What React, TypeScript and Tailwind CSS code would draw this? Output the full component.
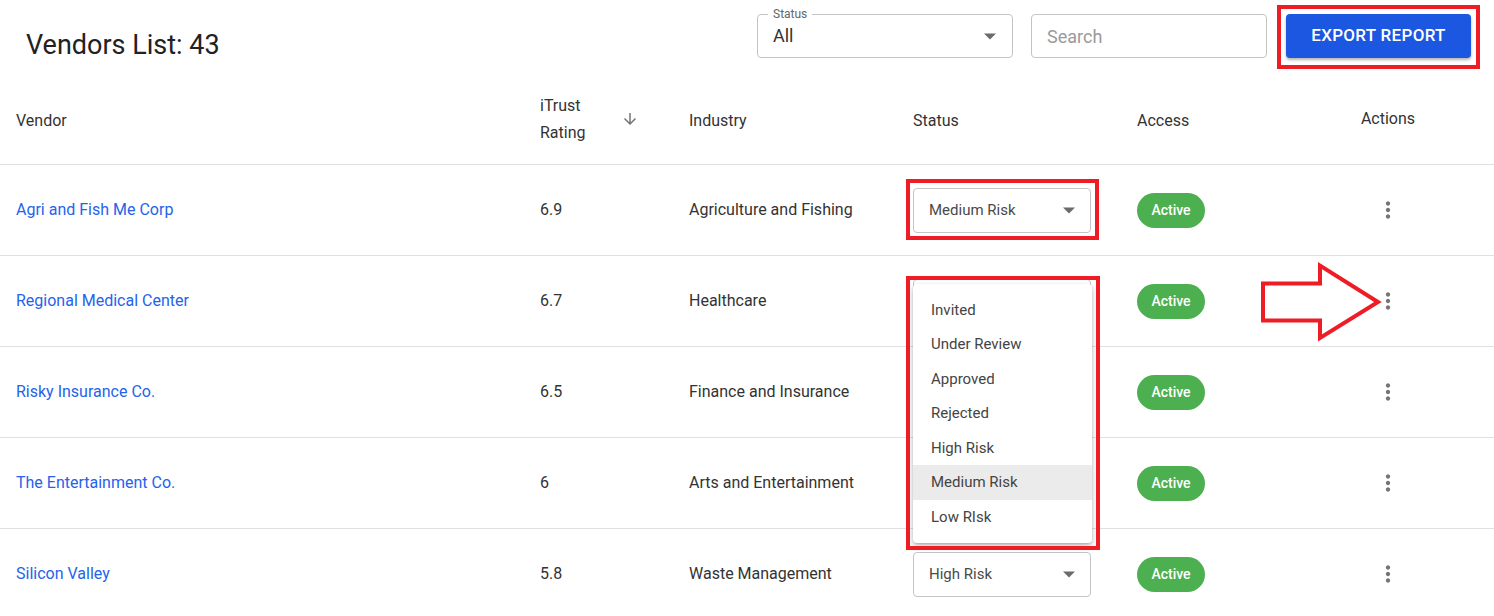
import React from "react";

type Vendor = {
  name: string;
  rating: string;
  industry: string;
  status: string;
};

const vendors: Vendor[] = [
  { name: "Agri and Fish Me Corp", rating: "6.9", industry: "Agriculture and Fishing", status: "Medium Risk" },
  { name: "Regional Medical Center", rating: "6.7", industry: "Healthcare", status: "" },
  { name: "Risky Insurance Co.", rating: "6.5", industry: "Finance and Insurance", status: "" },
  { name: "The Entertainment Co.", rating: "6", industry: "Arts and Entertainment", status: "" },
  { name: "Silicon Valley", rating: "5.8", industry: "Waste Management", status: "High Risk" },
];

const menuOptions = ["Invited", "Under Review", "Approved", "Rejected", "High Risk", "Medium Risk", "Low RIsk"];

const cols = "grid grid-cols-[524px_149px_224px_224px_161px_1fr]";

function Caret() {
  return (
    <svg width="14" height="8" viewBox="0 0 14 8" className="shrink-0">
      <path d="M1 1.5h12L7 7.5z" fill="#6b6b6b" />
    </svg>
  );
}

function MoreVert() {
  return (
    <svg width="26" height="26" viewBox="0 0 24 24" fill="#757575">
      <path d="M12 8c1.1 0 2-.9 2-2s-.9-2-2-2-2 .9-2 2 .9 2 2 2zm0 2c-1.1 0-2 .9-2 2s.9 2 2 2 2-.9 2-2-.9-2-2-2zm0 6c-1.1 0-2 .9-2 2s.9 2 2 2 2-.9 2-2-.9-2-2-2z" />
    </svg>
  );
}

function StatusSelect({ value }: { value: string }) {
  return (
    <div className="flex h-[45px] w-[178px] items-center justify-between rounded border border-[#c4c4c4] bg-white pl-[15px] pr-[14px] text-[15px] text-[#4a4a4a]">
      <span>{value}</span>
      <Caret />
    </div>
  );
}

export default function App() {
  return (
    <div
      className="relative h-[616px] w-[1494px] overflow-hidden bg-white text-[#333]"
      style={{ fontFamily: "Roboto, 'Liberation Sans', sans-serif" }}
    >
      {/* toolbar */}
      <div className="flex h-[80px] items-start justify-between pr-[23px] pt-[14px]">
        <h1 className="ml-[26px] mt-[15px] text-[27px] leading-8 text-[#222]">Vendors List: 43</h1>
        <div className="flex items-start">
          <div className="relative flex h-[44px] w-[256px] items-center justify-between rounded border border-[#c4c4c4] pl-[15px] pr-[15px]">
            <span className="absolute -top-[9px] left-[10px] bg-white px-[5px] text-[12px] leading-4 text-[#666]">
              Status
            </span>
            <span className="-mt-[2px] text-[18px] text-[#333]">All</span>
            <Caret />
          </div>
          <div className="ml-[18px] flex h-[44px] w-[236px] items-center rounded border border-[#c4c4c4] pl-[15px] text-[18px] text-[#9a9a9a]">
            Search
          </div>
          <button
            type="button"
            className="ml-[19px] h-[44px] w-[185px] rounded bg-[#1b57e0] text-[17px] font-medium tracking-[0.3px] text-white shadow-[0_2px_3px_rgba(0,0,0,0.3)]"
          >
            EXPORT REPORT
          </button>
        </div>
      </div>

      {/* header */}
      <div className={`${cols} h-[85px] items-center border-b border-[#e0e0e0] text-[16px] text-[#333]`}>
        <div className="-mt-[2px] pl-4">Vendor</div>
        <div className="-mt-[6px] flex items-center pl-4">
          <span className="w-[81px] leading-[27px]">
            iTrust
            <br />
            Rating
          </span>
          <svg width="18" height="18" viewBox="0 0 24 24" fill="#757575">
            <path d="M20 12l-1.41-1.41L13 16.17V4h-2v12.17l-5.58-5.59L4 12l8 8 8-8z" />
          </svg>
        </div>
        <div className="-mt-[2px] pl-4">Industry</div>
        <div className="-mt-[2px] pl-4">Status</div>
        <div className="-mt-[2px] pl-4">Access</div>
        <div className="-mt-[6px] text-center">Actions</div>
      </div>

      {/* rows */}
      {vendors.map((v, i) => (
        <div key={v.name} className={`${cols} h-[91px] items-center border-b border-[#e0e0e0] text-[16px]`}>
          <div className="pl-4 text-[#2563eb]">{v.name}</div>
          <div className="pl-4 text-[#333]">{v.rating}</div>
          <div className="pl-4 text-[#333]">{v.industry}</div>
          <div className="relative pl-4">
            <StatusSelect value={v.status} />
            {i === 1 ? (
              <div className="absolute left-4 top-[5px] z-10 w-[179px] rounded bg-white py-[9px] shadow-[0_3px_6px_rgba(0,0,0,0.25),0_1px_2px_rgba(0,0,0,0.15)]">
                {menuOptions.map((o) => (
                  <div
                    key={o}
                    className={`flex h-[34.5px] items-center pl-[18px] text-[15px] text-[#444] ${
                      o === "Medium Risk" ? "bg-[#ebebeb]" : ""
                    }`}
                  >
                    {o}
                  </div>
                ))}
              </div>
            ) : null}
          </div>
          <div className="pl-4">
            <span className="inline-flex h-[35px] w-[68px] items-center justify-center rounded-full bg-[#4caf50] text-[14px] font-medium text-white">
              Active
            </span>
          </div>
          <div className="flex justify-center">
            <MoreVert />
          </div>
        </div>
      ))}

      {/* red annotations */}
      <div className="pointer-events-none absolute left-[1277px] top-[5px] h-[64px] w-[203px] border-4 border-[#ee1c24]" />
      <div className="pointer-events-none absolute left-[906px] top-[179px] h-[61px] w-[193px] border-4 border-[#ee1c24]" />
      <div className="pointer-events-none absolute left-[906px] top-[276px] z-20 h-[274px] w-[194px] border-4 border-[#ee1c24]" />
      <svg className="pointer-events-none absolute left-[1258px] top-[260px]" width="130" height="84" viewBox="0 0 130 84">
        <path
          d="M5 23.5h57v-18l58 36.5-58 36v-17.5h-57z"
          fill="none"
          stroke="#ee1c24"
          strokeWidth="4"
          strokeLinejoin="miter"
        />
      </svg>
    </div>
  );
}
